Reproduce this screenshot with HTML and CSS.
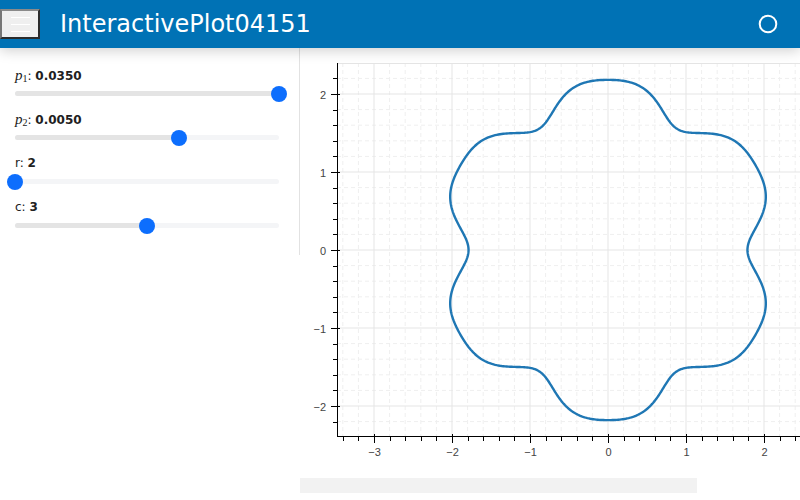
FILE: index.html
```html
<!DOCTYPE html>
<html lang="en">
<head>
    <meta charset="UTF-8">
    <meta name="viewport" content="width=device-width, initial-scale=1.0">
    <title>InteractivePlot04151</title>
    <link rel="stylesheet" href="styles.css">
</head>
<body>
    <header class="header">
        <button class="menu-btn" aria-label="menu">
            <span></span><span></span><span></span>
        </button>
        <div class="title">InteractivePlot04151</div>
        <svg class="busy" width="22" height="22" viewBox="0 0 22 22">
            <circle cx="11" cy="11" r="8.3" fill="none" stroke="#fff" stroke-width="2"/>
        </svg>
    </header>

    <div class="layout">
        <div class="sidebar">
            <div class="slider" data-value="1">
                <div class="slider-label"><span class="math">p<sub>1</sub></span>: <b>0.0350</b></div>
                <div class="slider-track"><div class="fill"></div><div class="thumb"></div></div>
            </div>
            <div class="slider" data-value="0.621">
                <div class="slider-label"><span class="math">p<sub>2</sub></span>: <b>0.0050</b></div>
                <div class="slider-track"><div class="fill"></div><div class="thumb"></div></div>
            </div>
            <div class="slider" data-value="0">
                <div class="slider-label">r: <b>2</b></div>
                <div class="slider-track"><div class="fill"></div><div class="thumb"></div></div>
            </div>
            <div class="slider" data-value="0.501">
                <div class="slider-label">c: <b>3</b></div>
                <div class="slider-track"><div class="fill"></div><div class="thumb"></div></div>
            </div>
        </div>

        <div class="main">
            <svg id="plot" class="plot" width="500" height="430"></svg>
            <div class="scroll-bar"></div>
        </div>
    </div>

<script>
  // slider positions
  document.querySelectorAll('.slider').forEach(function (s) {
      const pct = parseFloat(s.dataset.value) * 100 + '%';
      s.querySelector('.fill').style.width = pct;
      s.querySelector('.thumb').style.left = pct;
  });

  const NS = 'http://www.w3.org/2000/svg';
  const svg = document.getElementById('plot');

  // frame (px inside the svg) and scale
  const L = 37, T = 15, B = 388, R = 500;
  const CX = 308, CY = 202, S = 78;
  const X = x => CX + S * x;
  const Y = y => CY - S * y;

  function add(tag, attrs, parent) {
      const el = document.createElementNS(NS, tag);
      for (const k in attrs) el.setAttribute(k, attrs[k]);
      (parent || svg).appendChild(el);
      return el;
  }

  const fmt = v => (v < 0 ? '\u2212' + Math.abs(v) : String(v));

  // minor grid
  for (let i = -17; i <= 12; i++) {
      if (i % 5 === 0) continue;
      const x = X(i / 5);
      if (x > L && x < R) add('line', {x1: x, y1: T, x2: x, y2: B, class: 'grid-minor'});
  }
  for (let i = -11; i <= 11; i++) {
      if (i % 5 === 0) continue;
      const y = Y(i / 5);
      if (y > T && y < B) add('line', {x1: L, y1: y, x2: R, y2: y, class: 'grid-minor'});
  }
  // major grid
  for (let i = -3; i <= 2; i++) add('line', {x1: X(i), y1: T, x2: X(i), y2: B, class: 'grid-major'});
  for (let i = -2; i <= 2; i++) add('line', {x1: L, y1: Y(i), x2: R, y2: Y(i), class: 'grid-major'});

  // outline
  add('line', {x1: L, y1: T + 0.5, x2: R, y2: T + 0.5, class: 'outline'});

  // curve
  let pts = [];
  for (let k = 0; k <= 720; k++) {
      const t = k / 720 * 2 * Math.PI;
      const r = 158.3 - 15.35 * Math.cos(6 * t) - 3.5 * Math.cos(12 * t);
      pts.push((CX + r * Math.cos(t)).toFixed(2) + ',' + (CY - r * Math.sin(t)).toFixed(2));
  }
  add('polyline', {points: pts.join(' '), class: 'curve'});

  // axes
  add('line', {x1: L + 0.5, y1: T, x2: L + 0.5, y2: B + 0.5, class: 'axis'});
  add('line', {x1: L, y1: B + 0.5, x2: R, y2: B + 0.5, class: 'axis'});

  for (let i = -17; i <= 12; i++) {
      const x = Math.round(X(i / 5)) + 0.5;
      if (x <= L || x > R) continue;
      const major = i % 5 === 0;
      add('line', {x1: x, y1: B - (major ? 2 : 0), x2: x, y2: B + (major ? 7 : 5), class: 'axis'});
      if (major) {
          const t = add('text', {x: x, y: B + 20, class: 'tick-label', 'text-anchor': 'middle'});
          t.textContent = fmt(i / 5);
      }
  }
  for (let i = -11; i <= 11; i++) {
      const y = Math.round(Y(i / 5)) + 0.5;
      if (y <= T || y >= B) continue;
      const major = i % 5 === 0;
      add('line', {x1: L - (major ? 6 : 4), y1: y, x2: L + (major ? 3 : 1), y2: y, class: 'axis'});
      if (major) {
          const t = add('text', {x: L - 11, y: y + 4, class: 'tick-label', 'text-anchor': 'end'});
          t.textContent = fmt(i / 5);
      }
  }
</script>
</body>
</html>
```

FILE: styles.css
```css
body {
    margin: 0;
    font-family: "DejaVu Sans", sans-serif;
    background: #fff;
    color: #212121;
}

.header {
    position: relative;
    z-index: 2;
    display: flex;
    align-items: center;
    height: 48px;
    background-color: #0072b5;
    box-shadow: 0 3px 12px rgba(0, 0, 0, 0.18);
}

.menu-btn {
    display: flex;
    flex-direction: column;
    justify-content: center;
    align-items: center;
    gap: 6px;
    width: 40px;
    height: 30px;
    padding: 0;
    background: #efefef;
    border: 2px solid;
    border-color: #8a8a8a #2b2b2b #2b2b2b #767676;
}

.menu-btn span {
    display: block;
    width: 19px;
    height: 1px;
    background: #fff;
}

.title {
    margin-left: 20px;
    color: #fff;
    font-size: 24px;
    line-height: 28px;
}

.busy {
    margin-left: auto;
    margin-right: 21px;
}

.layout {
    display: flex;
    align-items: flex-start;
}

.sidebar {
    width: 264px;
    padding: 19px 20px 20px 15px;
    border-right: 1px solid #e2e2e2;
}

.slider {
    padding-bottom: 8px;
}

.slider:last-child {
    padding-bottom: 0;
}

.slider-label {
    height: 16px;
    font-size: 12px;
    line-height: 16px;
    white-space: nowrap;
}

.slider-label b {
    font-weight: bold;
}

.math {
    font-family: "Liberation Serif", serif;
    font-style: italic;
    font-size: 15px;
}

.math sub {
    font-style: normal;
    font-size: 10px;
    vertical-align: -2px;
    line-height: 0;
}

.slider-track {
    position: relative;
    height: 5px;
    margin: 8px 0 7px;
    border-radius: 3px;
    background: #f4f5f7;
}

.slider-track .fill {
    height: 100%;
    border-radius: 3px;
    background: #e4e4e4;
}

.slider-track .thumb {
    position: absolute;
    top: 50%;
    width: 16px;
    height: 16px;
    margin: -8px 0 0 -8px;
    border-radius: 50%;
    background: #0d6efd;
}

.main {
    display: flex;
    flex-direction: column;
}

.plot {
    display: block;
}

.grid-minor {
    stroke: #efefef;
    stroke-width: 1;
    stroke-dasharray: 4 3;
}

.grid-major {
    stroke: #e5e5e5;
    stroke-width: 1;
}

.outline {
    stroke: #e5e5e5;
    stroke-width: 1;
}

.axis {
    stroke: #000;
    stroke-width: 1;
}

.curve {
    fill: none;
    stroke: #1f77b4;
    stroke-width: 2.4;
    stroke-linejoin: round;
}

.tick-label {
    font-family: "Liberation Sans", sans-serif;
    font-size: 11px;
    fill: #444;
}

.scroll-bar {
    width: 397px;
    height: 15px;
    background: #f2f2f2;
}
```
